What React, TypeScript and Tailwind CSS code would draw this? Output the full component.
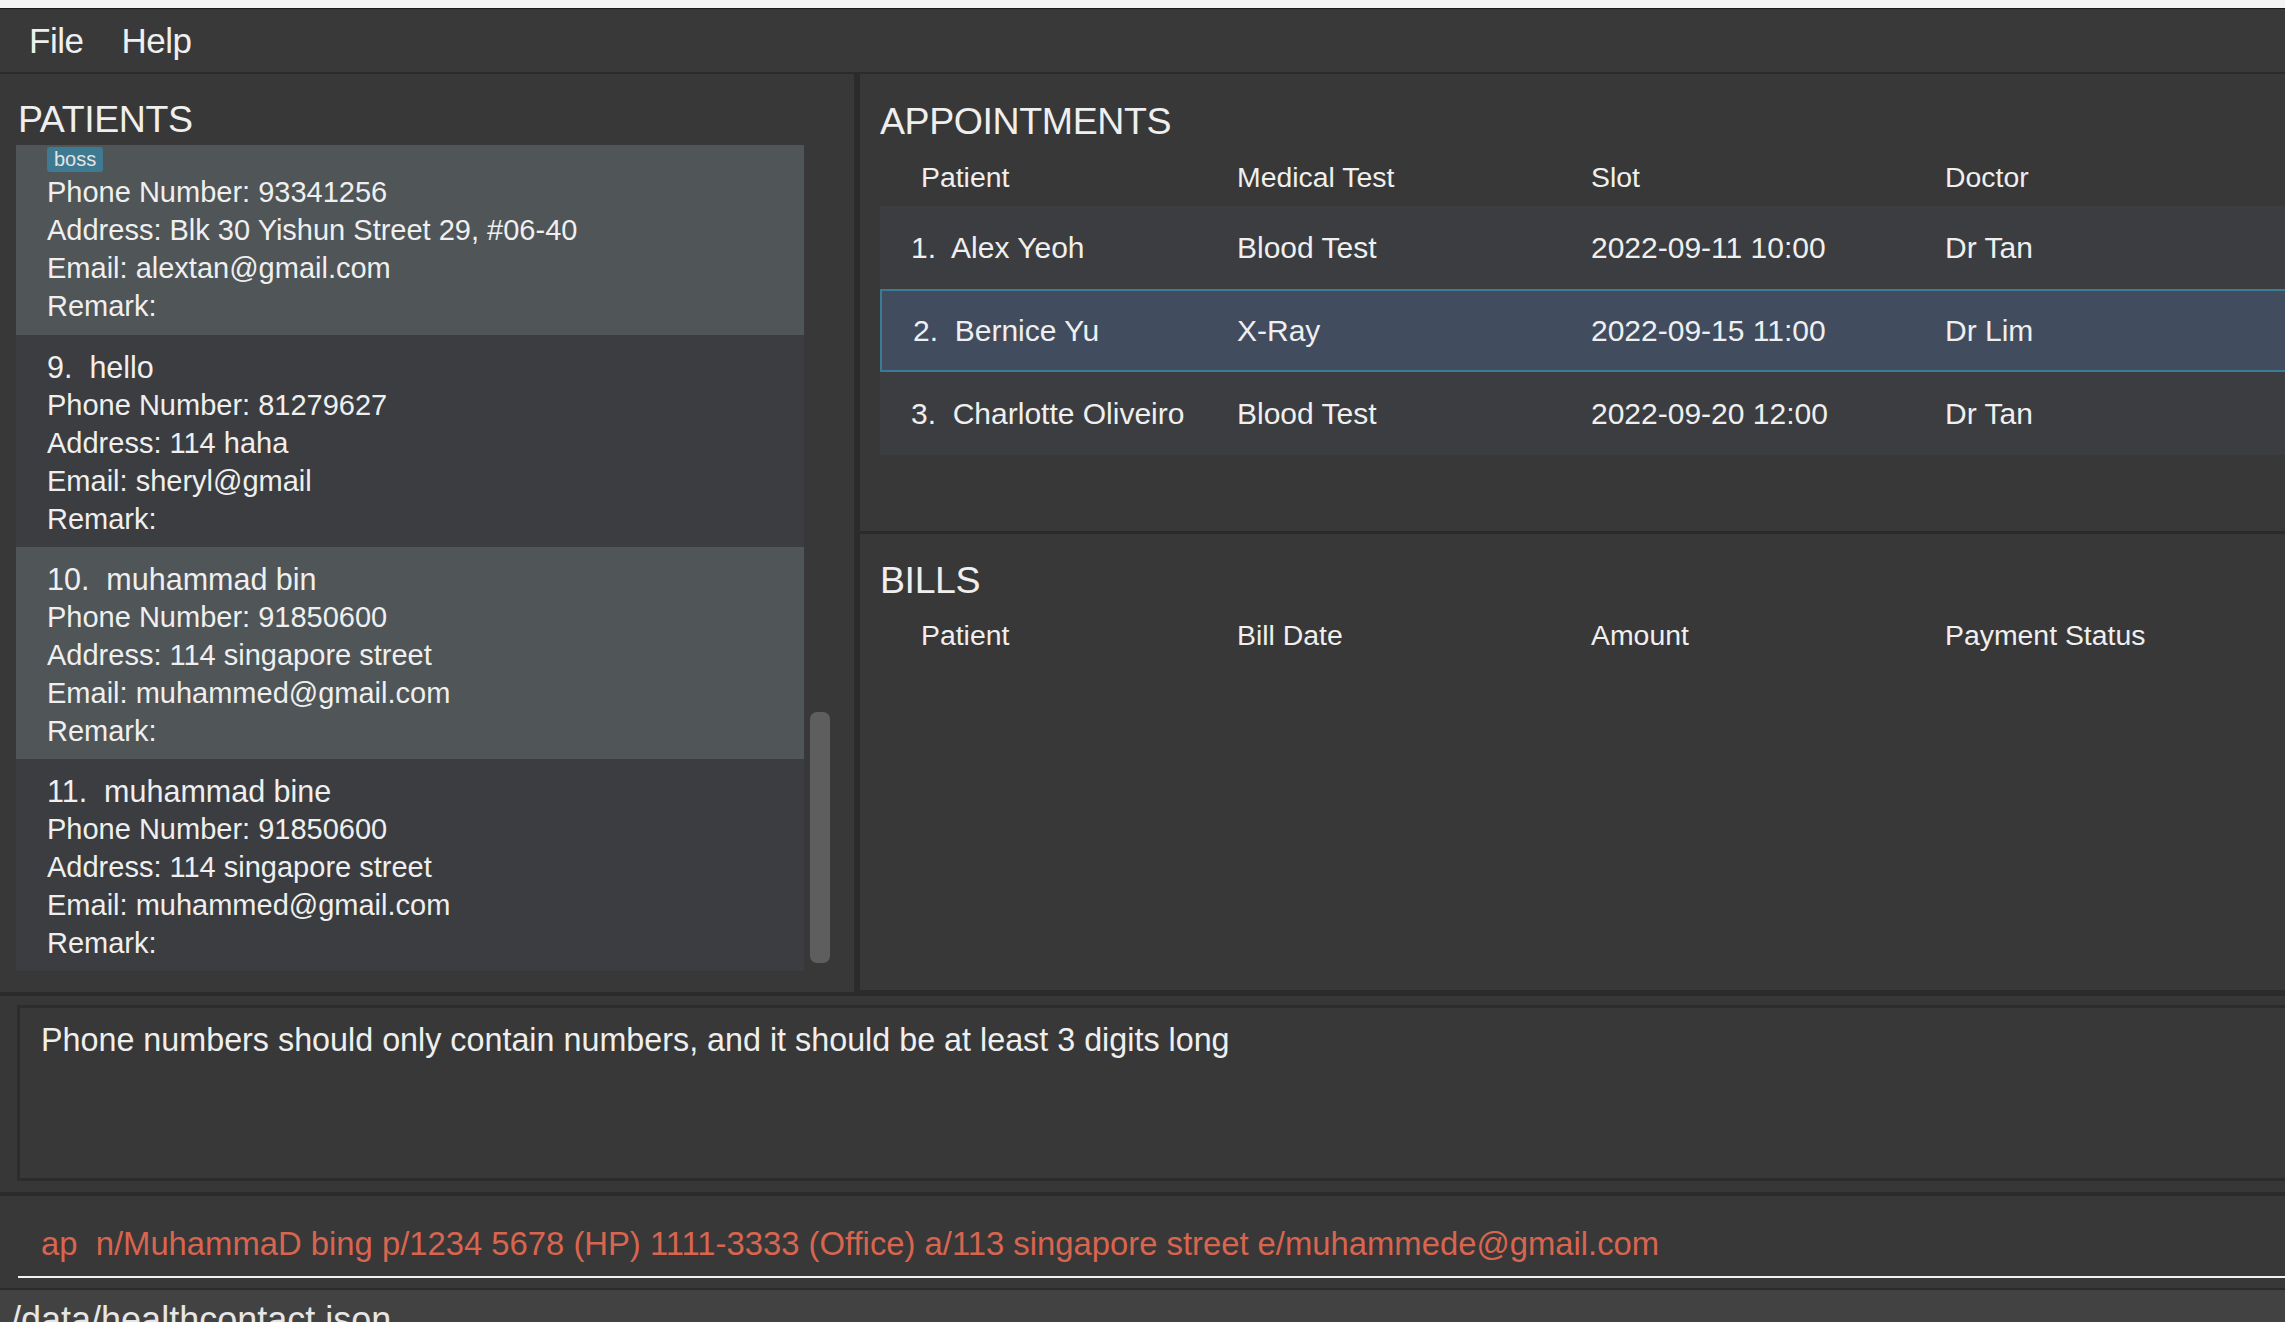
import React from "react";

type Patient = {
  index?: string;
  name?: string;
  tag?: string;
  phone: string;
  address: string;
  email: string;
  light: boolean;
  partial?: boolean;
};

const patients: Patient[] = [
  { tag: "boss", phone: "93341256", address: "Blk 30 Yishun Street 29, #06-40", email: "alextan@gmail.com", light: true, partial: true },
  { index: "9.", name: "hello", phone: "81279627", address: "114 haha", email: "sheryl@gmail", light: false },
  { index: "10.", name: "muhammad bin", phone: "91850600", address: "114 singapore street", email: "muhammed@gmail.com", light: true },
  { index: "11.", name: "muhammad bine", phone: "91850600", address: "114 singapore street", email: "muhammed@gmail.com", light: false },
];

const appointments = [
  { i: "1.", name: "Alex Yeoh", test: "Blood Test", slot: "2022-09-11 10:00", doctor: "Dr Tan", selected: false },
  { i: "2.", name: "Bernice Yu", test: "X-Ray", slot: "2022-09-15 11:00", doctor: "Dr Lim", selected: true },
  { i: "3.", name: "Charlotte Oliveiro", test: "Blood Test", slot: "2022-09-20 12:00", doctor: "Dr Tan", selected: false },
];

function Line({ children }: { children: React.ReactNode }) {
  return <div className="h-[38px] leading-[38px] text-[29px] whitespace-pre">{children}</div>;
}

function PatientCard({ p }: { p: Patient }) {
  return (
    <div
      className={
        (p.light ? "bg-[#505558] " : "bg-[#3c3d40] ") +
        (p.partial ? "h-[190px] pt-[2px] pl-[31px]" : "h-[212px] pt-[13px] pl-[31px]")
      }
    >
      {p.name && (
        <div className="h-[38px] leading-[38px] text-[30.5px] whitespace-pre">
          {p.index}  {p.name}
        </div>
      )}
      {p.tag && (
        <div className="flex mb-[1px]">
          <span className="h-[25px] leading-[25px] px-[7px] rounded-[3px] bg-[#3e7a91] text-[20px] text-[#e4e4e4]">
            {p.tag}
          </span>
        </div>
      )}
      <Line>Phone Number: {p.phone}</Line>
      <Line>Address: {p.address}</Line>
      <Line>Email: {p.email}</Line>
      <Line>Remark:</Line>
    </div>
  );
}

function ColumnHeader({ cols }: { cols: string[] }) {
  return (
    <div className="grid grid-cols-[357px_354px_354px_1fr] h-[38px] leading-[38px] text-[28.4px]">
      <div className="pl-[41px]">{cols[0]}</div>
      <div>{cols[1]}</div>
      <div>{cols[2]}</div>
      <div>{cols[3]}</div>
    </div>
  );
}

export default function App() {
  return (
    <div className="w-[2285px] h-[1322px] overflow-hidden flex flex-col bg-[#383838] text-[#efefef] font-['Liberation_Sans',Arial,sans-serif]">
      {/* window top strip */}
      <div className="h-[8px] bg-[#f4f4f4] shrink-0" />
      <div className="h-[1px] bg-[#1c1c1c] shrink-0" />

      {/* menu bar */}
      <div className="h-[63px] shrink-0 bg-[#393939] flex items-center pl-[29px] gap-[38px] text-[35px] leading-[35px] tracking-[-0.5px]">
        <span>File</span>
        <span>Help</span>
      </div>
      <div className="h-[2px] bg-[#2b2b2b] shrink-0" />

      {/* main area */}
      <div className="h-[918px] shrink-0 flex">
        {/* patients panel */}
        <div className="w-[854px] shrink-0 bg-[#383838] flex flex-col pt-[27px] pl-[16px]">
          <div className="h-[37px] leading-[37px] text-[37.5px] tracking-[-0.4px] pl-[2px]">PATIENTS</div>
          <div className="mt-[7px] flex gap-[6px]">
            <div className="w-[788px] h-[826px] overflow-hidden flex flex-col">
              {patients.map((p, i) => (
                <PatientCard key={i} p={p} />
              ))}
            </div>
            <div className="w-[20px] h-[826px] flex flex-col">
              <div className="mt-[567px] h-[251px] rounded-[7px] bg-[#5e5e5e]" />
            </div>
          </div>
        </div>
        <div className="w-[6px] shrink-0 bg-[#2b2b2b]" />

        {/* right side */}
        <div className="flex-1 flex flex-col">
          {/* appointments */}
          <div className="h-[457px] shrink-0 bg-[#383838] pt-[29px] pl-[20px] flex flex-col">
            <div className="h-[37px] leading-[37px] text-[37.5px] tracking-[-0.4px]">APPOINTMENTS</div>
            <div className="mt-[18px]">
              <ColumnHeader cols={["Patient", "Medical Test", "Slot", "Doctor"]} />
            </div>
            <div className="mt-[10px] flex flex-col">
              {appointments.map((a, i) => (
                <div
                  key={i}
                  className={
                    "grid grid-cols-[357px_354px_354px_1fr] h-[83px] items-center text-[30px] leading-[36px] whitespace-pre " +
                    (a.selected
                      ? "bg-[#414d5f] border-y-2 border-l-2 border-[#3b7b93]"
                      : "bg-[#3c3d40]")
                  }
                >
                  <div className="pl-[31px]">
                    {a.i}  {a.name}
                  </div>
                  <div className={a.selected ? "-ml-[2px]" : ""}>{a.test}</div>
                  <div className={a.selected ? "-ml-[2px]" : ""}>{a.slot}</div>
                  <div className={a.selected ? "-ml-[2px]" : ""}>{a.doctor}</div>
                </div>
              ))}
            </div>
          </div>
          <div className="h-[3px] shrink-0 bg-[#2b2b2b]" />
          {/* bills */}
          <div className="flex-1 bg-[#383838] pt-[28px] pl-[20px] flex flex-col">
            <div className="h-[37px] leading-[37px] text-[37.5px] tracking-[-0.4px]">BILLS</div>
            <div className="mt-[17px]">
              <ColumnHeader cols={["Patient", "Bill Date", "Amount", "Payment Status"]} />
            </div>
          </div>
          <div className="h-[2px] shrink-0 bg-[#2b2b2b]" />
        </div>
      </div>

      <div className="h-[4px] shrink-0 bg-[#2b2b2b]" />

      {/* result display */}
      <div className="h-[196px] shrink-0 bg-[#373737] pt-[9px] pl-[17px]">
        <div className="h-[176px] border-[3px] border-r-0 border-[#2c2c2c] bg-[#383838] pt-[12px] pl-[21px]">
          <div className="h-[40px] leading-[40px] text-[32.3px] whitespace-pre">
            Phone numbers should only contain numbers, and it should be at least 3 digits long
          </div>
        </div>
      </div>

      <div className="h-[4px] shrink-0 bg-[#2b2b2b]" />

      {/* command box */}
      <div className="h-[92px] shrink-0 bg-[#383838] pt-[28px] pl-[18px] flex flex-col">
        <div className="h-[40px] leading-[40px] text-[32.8px] text-[#d8654f] pl-[23px] whitespace-pre">
          ap  n/MuhammaD bing p/1234 5678 (HP) 1111-3333 (Office) a/113 singapore street e/muhammede@gmail.com
        </div>
        <div className="mt-[12px] h-[2px] bg-[#f2f2f2]" />
      </div>

      <div className="h-[2px] shrink-0 bg-[#2b2b2b]" />

      {/* status bar */}
      <div className="flex-1 bg-[#424242] overflow-hidden pt-[8px] pl-[11px]">
        <div className="h-[44px] leading-[44px] text-[36px] text-[#e6e6e6] whitespace-pre">/data/healthcontact.json</div>
      </div>
    </div>
  );
}
